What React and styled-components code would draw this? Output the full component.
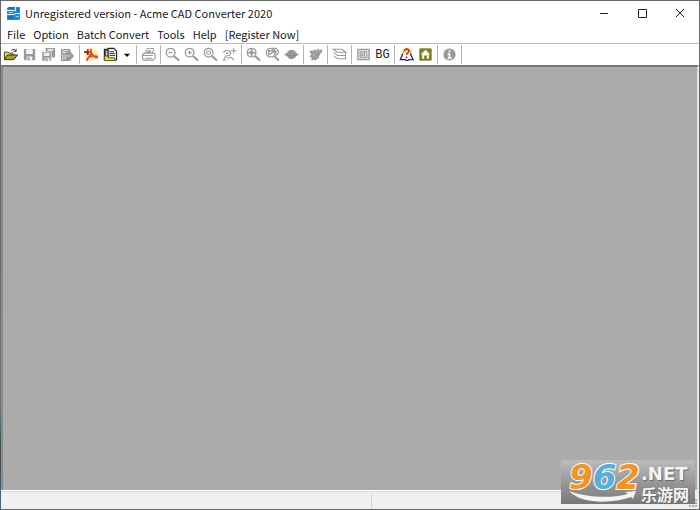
import React from 'react'
import styled, { createGlobalStyle } from 'styled-components'

const GlobalStyle = createGlobalStyle`
  * {
    box-sizing: border-box;
  }
  body {
    margin: 0;
    background: #666;
    font-family: "Noto Sans CJK SC", "Noto Sans", sans-serif;
    font-size: 11px;
    color: #1a1a1a;
  }
  button {
    font: inherit;
    color: inherit;
    border: 0;
    padding: 0;
    background: none;
  }
`

const Desktop = styled.div`
  display: flex;
  min-height: 100vh;
  padding: 1px;
  background: linear-gradient(#62666a 0, #707376 80%, #3f6f78 84%, #4a4a4a 88%, #3f6c8a 100%) left / 1px 100% no-repeat, #68696b;
`

const Window = styled.div`
  position: relative;
  flex: 1;
  display: flex;
  flex-direction: column;
  min-width: 0;
  background: #fff;
`

const TitleBar = styled.header`
  display: flex;
  align-items: center;
  height: 24px;
  padding-left: 5px;
`

const Title = styled.h1`
  flex: 1;
  margin: 0 0 0 4px;
  font-size: 11px;
  line-height: 24px;
  font-weight: 400;
  white-space: nowrap;
`

const CaptionButton = styled.button`
  display: flex;
  align-items: center;
  justify-content: center;
  width: 38px;
  height: 24px;
`

const MenuBar = styled.nav`
  display: flex;
  height: 18px;
  padding-left: 2px;
`

const MenuItem = styled.button`
  padding: 0 4px;
  line-height: 18px;
  white-space: nowrap;
`

const ToolBar = styled.div`
  display: flex;
  align-items: center;
  height: 22px;
  border-top: 1px solid #bcbcbc;
`

const ToolButton = styled.button`
  display: flex;
  align-items: center;
  justify-content: center;
  flex: none;
  width: ${props => (props.$narrow ? '14px' : '19px')};
  height: 20px;
  color: #999;
`

const BackgroundLabel = styled.span`
  font-family: "Liberation Mono", monospace;
  font-size: 12px;
  color: #222;
`

const Separator = styled.span`
  flex: none;
  width: 1px;
  height: 19px;
  margin: 0 2px;
  background: #b4b4b4;
`

const Workspace = styled.main`
  flex: 1;
  border: 2px solid #8a8a8a;
  border-top-color: #757575;
  border-right-color: #e4e4e4;
  border-bottom: 0;
  background: #ababab;
`

const StatusBar = styled.footer`
  display: flex;
  height: 19px;
  padding-top: 3px;
  border-top: 1px solid #fff;
  background: #f0f0f0;
  box-shadow: inset 0 1px #d8d8d8;
`

const StatusPane = styled.div`
  flex: ${props => props.$grow};
  border-right: ${props => (props.$last ? '0' : '1px solid #d4d4d4')};
`

const Grip = styled.svg`
  align-self: flex-end;
  margin: 0 1px 1px 0;
`

const Watermark = styled.div`
  position: absolute;
  right: 4px;
  bottom: 5px;
  display: flex;
  width: 134px;
  height: 44px;
  padding-left: 8px;
  background: linear-gradient(rgba(190, 190, 190, 0.9), rgba(112, 112, 112, 0.94));
  color: #f4f4f4;
`

const Brand = styled.div`
  display: flex;
  flex-direction: column;
  width: 72px;
`

const Digits = styled.div`
  height: 31px;
  font: italic bold 34px/34px "DejaVu Sans", sans-serif;
  white-space: nowrap;
`

const Digit = styled.span`
  color: ${props => props.$color};
  -webkit-text-stroke: 2px #fff;
  paint-order: stroke fill;
`

const Domain = styled.div`
  display: flex;
  flex-direction: column;
  padding-top: 4px;
  text-shadow: 1px 1px 1px #666;
`

const Suffix = styled.span`
  font: bold 18px/20px "DejaVu Sans", sans-serif;
`

const SiteName = styled.span`
  font: bold 16px/20px "Noto Sans CJK SC", sans-serif;
`

function Icon({ children, size = 16 }) {
  return (
    <svg width={size} height={size} viewBox="0 0 16 16" fill="none" stroke="currentColor" strokeWidth="1.4" aria-hidden="true">
      {children}
    </svg>
  )
}

const Lens = () => (
  <>
    <circle cx="6" cy="6" r="4.6" />
    <path d="M9.500 9.500l5.500 5" strokeWidth="2.200" />
  </>
)

const icons = {
  open: (
    <>
      <path d="M1.500 13V5.500h4l1 1h4V9" fill="#e8e35a" stroke="#3c3c10" strokeWidth="1" />
      <path d="M1.500 13.500l3-5h11l-4 5z" fill="#a3a12c" stroke="#26260a" strokeWidth="1" />
      <path d="M9 4c1-2 3-2 4.500 0M14 2v2.500h-3" stroke="#222" strokeWidth="1" />
    </>
  ),
  save: (
    <>
      <path d="M2 2h12v12H3l-1-1z" fill="currentColor" stroke="none" />
      <path d="M4.500 2.500h7v5h-7zM5 10h6v4H5z" fill="#f5f5f5" stroke="none" />
      <path d="M6 11h2v3H6z" fill="currentColor" stroke="none" />
    </>
  ),
  saveAll: (
    <>
      <path d="M5 1h10v10H5z" fill="currentColor" stroke="none" />
      <path d="M7 2h6v2H7z" fill="#eee" stroke="none" />
      <path d="M1 5h10v10H1z" fill="currentColor" stroke="#fff" strokeWidth=".6" />
      <path d="M3 6h6v3.500H3zM4 11.500h5V15H4z" fill="#eee" stroke="none" />
      <path d="M5 12h2v3H5z" fill="currentColor" stroke="none" />
    </>
  ),
  exportFile: (
    <>
      <path d="M1 2h10v3l4 4.500-4 4.500v1H1z" fill="currentColor" stroke="none" />
      <path d="M2.500 4H9M2.500 6h4M3 8v6M5.500 8v5" stroke="#eee" strokeWidth="1" />
      <path d="M7 9.500h4" stroke="#ddd" strokeWidth=".8" />
    </>
  ),
  pdf: (
    <>
      <circle cx="8" cy="8" r="7" fill="#fff0bd" stroke="none" />
      <path d="M7 2c1.500 3 0 7-4 12 1-3 5-5 11-4 1 3-4 1-7-5" stroke="#dc4f1d" strokeWidth="2" strokeLinejoin="round" />
      <path d="M0 5.500h6M4 2.500v6" stroke="#a81d12" strokeWidth="2" />
    </>
  ),
  batch: (
    <>
      <path d="M1.500 14V2.500h4" stroke="#222" strokeWidth="1.300" />
      <path d="M2.500 11V4h3v7z" fill="#cfcfcf" stroke="#333" strokeWidth="1" />
      <path d="M5.500 1.500h6l3 3v9h-9z" fill="#eee" stroke="#222" strokeWidth="1.200" />
      <path d="M7 5h5M7 7h6M7 9h6" stroke="#333" strokeWidth="1" />
      <path d="M1.500 14.500v-5h3l1.500 2h6l1.500 3z" fill="#e9dd3d" stroke="#55510b" strokeWidth="1" />
    </>
  ),
  arrow: <path d="M3 6h10l-5 5z" fill="#111" stroke="none" />,
  print: (
    <>
      <path d="M4.500 7l2-5.500h7L12 7" strokeWidth="1" />
      <path d="M1.500 8l2-1.500h10l1.500 1.500v4l-2 2h-10l-1.500-2zM2 9h11M4 12h8M7 4h4M6.500 5.500h4" strokeWidth="1.200" />
    </>
  ),
  zoomOut: <><Lens /><path d="M4 6h4" /></>,
  zoomIn: <><Lens /><path d="M4 6h4M6 4v4" /></>,
  zoomWindow: <><Lens /><path d="M4 4.500h4v3H4z" strokeWidth="1" /></>,
  pan: (
    <>
      <path d="M1.500 6l2-2.500 4 .5 2 2-1.500 3-4 .5L2 13M4 6.500h3" strokeWidth="1.200" />
      <path d="M12.500 1v6M9.500 4h6M1 14h3M5 12l5-1 3 3" strokeWidth="1.200" />
    </>
  ),
  zoomExtents: <><Lens /><path d="M1.500 6h9M6 1.500v9" /><path d="M4.500 4.500h3v3h-3z" strokeWidth="1" /></>,
  zoomPrevious: (
    <>
      <Lens />
      <path d="M4 9V4h4M8 3l1 2-4 3" strokeWidth="1.500" />
      <path d="M8 1.500h3.500L14 4v3l-3 2M9 4l3 1-2 3" strokeWidth="1.200" />
    </>
  ),
  orbit: (
    <>
      <ellipse cx="8" cy="8" rx="5" ry="5" fill="currentColor" stroke="none" />
      <path d="M0 8l4-2.500h8L16 8l-4 2.500H4z" fill="currentColor" stroke="none" />
      <path d="M3 8.500c3 1.500 7 1.500 10 0" stroke="#858585" strokeWidth="1" />
    </>
  ),
  settings: (
    <>
      <path d="M2 5l2.500-1L6 5l1-2 2 1 .5 2 2 .5 1 2-1.500 1 .5 2-2 .5L8 14l-2-1-2 1 .5-3-2.500-1L4 8z" fill="currentColor" strokeWidth="1" />
      <path d="M9 5l2-3 1 2 3-1-1 3-3 2z" fill="currentColor" strokeWidth="1" />
      <path d="M5 8l2 1M8 6l1 1M8 10l1 1M11 5l1-1" stroke="#ddd" strokeWidth="1" />
    </>
  ),
  layers: <path d="M1.500 2.500h9l4 3h-9zM2 6l4 3h8.500M2 9.500l4 3h8.500M14.500 6v7" strokeWidth="1.100" />,
  layout: (
    <>
      <path d="M2 2.500h12v11H2z" fill="#dedede" strokeWidth="1.300" />
      <path d="M4.500 5h7v6h-7zM5 7h3M5 9h4M9 5v4" strokeWidth="1" />
    </>
  ),
  help: (
    <>
      <circle cx="8" cy="7" r="6.500" fill="#fbf0a5" stroke="none" />
      <path d="M4 7l-2.500 6.500h5l1 .8h2l1-.8H15L12 7" fill="#fff" stroke="#1d2d68" strokeWidth="1.400" />
      <path d="M4 7l2-4 2-1 3 1 2 4" stroke="#bd9530" strokeWidth="1" />
      <path d="M6 4.500c0-3 4.500-3 4.500 0C10.500 6.500 8 6 8 8.500M8 10v2" stroke="#d52c1d" strokeWidth="1.700" />
    </>
  ),
  home: (
    <>
      <path d="M2 2h12v12H2z" fill="#85831e" stroke="#707015" strokeWidth="1" />
      <path d="M8 3l5 5h-1.500v4.500h-2V9h-3v3.500h-2V8H3z" fill="#fff" stroke="none" />
    </>
  ),
  info: (
    <>
      <circle cx="8" cy="8" r="6.500" fill="currentColor" stroke="none" />
      <path d="M8 3.500v2M6 7.500h2v4M6 11.800h4" stroke="#fff" strokeWidth="1.800" />
    </>
  )
}

const groups = [
  [['Open', 'open'], ['Save', 'save'], ['Save All', 'saveAll'], ['Export', 'exportFile']],
  [['Convert to PDF', 'pdf'], ['Batch Convert', 'batch'], ['More', 'arrow']],
  [['Print', 'print']],
  [['Zoom Out', 'zoomOut'], ['Zoom In', 'zoomIn'], ['Zoom Window', 'zoomWindow'], ['Pan', 'pan']],
  [['Zoom Extents', 'zoomExtents'], ['Zoom Previous', 'zoomPrevious'], ['Orbit', 'orbit']],
  [['Settings', 'settings']],
  [['Layers', 'layers']],
  [['Layout', 'layout'], ['Background', 'bg']],
  [['Help', 'help'], ['Home Page', 'home']],
  [['About', 'info']]
]

const menus = ['File', 'Option', 'Batch Convert', 'Tools', 'Help', '[Register Now]']

function AppIcon() {
  return (
    <svg width="15" height="15" viewBox="0 0 15 15" aria-hidden="true">
      <path d="M1 2l2-1h11v12l-1 1H1z" fill="#1e8fd8" />
      <path d="M9 0h1v5H1V4h8zM1 8h8v1H1zM9 7h5v1H9z" fill="#d8f1ff" />
      <path d="M3 1h5v2H2zM2 10h6v3H2zM11 2h2v4h-2z" fill="#0f74c4" />
      <path d="M3 6h4v1H3zM10 10h3v1h-3z" fill="#8ed5fa" />
    </svg>
  )
}

function Caption() {
  return (
    <TitleBar>
      <AppIcon />
      <Title>Unregistered version - Acme CAD Converter 2020</Title>
      <CaptionButton aria-label="Minimize">
        <svg width="10" height="10" stroke="#222"><path d="M1 5.500h8" /></svg>
      </CaptionButton>
      <CaptionButton aria-label="Maximize">
        <svg width="10" height="10" stroke="#222" fill="none"><path d="M1.500 1.500h8v8h-8z" /></svg>
      </CaptionButton>
      <CaptionButton aria-label="Close">
        <svg width="10" height="10" stroke="#222"><path d="M1 1l8 8M9 1l-8 8" /></svg>
      </CaptionButton>
    </TitleBar>
  )
}

function Tools() {
  return (
    <ToolBar role="toolbar">
      {groups.map((group, i) => (
        <React.Fragment key={i}>
          {group.map(([label, name]) => (
            <ToolButton key={name} title={label} aria-label={label} $narrow={name === 'arrow'}>
              {name === 'bg' ? <BackgroundLabel>BG</BackgroundLabel> : <Icon size={name === 'arrow' ? 10 : 15}>{icons[name]}</Icon>}
            </ToolButton>
          ))}
          <Separator />
        </React.Fragment>
      ))}
    </ToolBar>
  )
}

function SiteMark() {
  return (
    <Watermark>
      <Brand>
        <Digits>
          <Digit $color="#f39422">9</Digit>
          <Digit $color="#55aee0">6</Digit>
          <Digit $color="#f39422">2</Digit>
        </Digits>
        <svg width="68" height="12" viewBox="0 0 68 12" aria-hidden="true">
          <path d="M0 0c16 6 40 8 59 3l-3-2 11-1-3 8-2-2C42 13 12 13 0 0z" fill="#f4f4f4" />
        </svg>
      </Brand>
      <Domain>
        <Suffix>.NET</Suffix>
        <SiteName>乐游网</SiteName>
      </Domain>
    </Watermark>
  )
}

function App() {
  return (
    <Desktop>
      <GlobalStyle />
      <Window>
        <Caption />
        <MenuBar>
          {menus.map(name => <MenuItem key={name}>{name}</MenuItem>)}
        </MenuBar>
        <Tools />
        <Workspace />
        <StatusBar>
          <StatusPane $grow={7} />
          <StatusPane $grow={6} $last />
          <Grip width="9" height="9" fill="#aaa">
            <path d="M6 0h2v2H6zM3 3h2v2H3zM6 3h2v2H6zM0 6h2v2H0zM3 6h2v2H3zM6 6h2v2H6z" />
          </Grip>
        </StatusBar>
        <SiteMark />
      </Window>
    </Desktop>
  )
}

export default App
